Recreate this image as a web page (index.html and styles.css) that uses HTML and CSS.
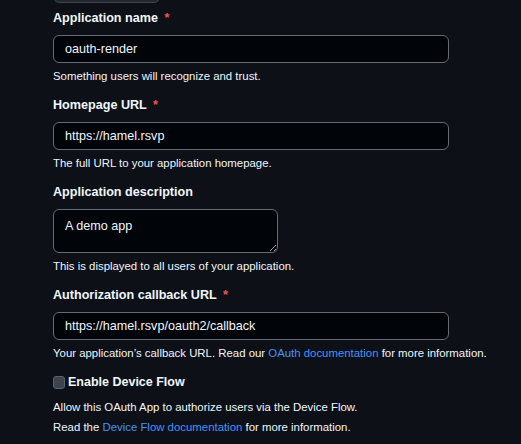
FILE: index.html
```html
<!DOCTYPE html>
<html lang="en">
<head>
<meta charset="utf-8">
<title>Register OAuth app</title>
<link rel="stylesheet" href="styles.css">
</head>
<body>
<form class="form">
  <div class="top-box"></div>

  <div class="group">
    <label class="label">Application name <span class="req">*</span></label>
    <input class="input" type="text" value="oauth-render">
    <p class="note">Something users will recognize and trust.</p>
  </div>

  <div class="group">
    <label class="label">Homepage URL <span class="req">*</span></label>
    <input class="input" type="text" value="https://hamel.rsvp">
    <p class="note">The full URL to your application homepage.</p>
  </div>

  <div class="group">
    <label class="label">Application description</label>
    <textarea class="textarea">A demo app</textarea>
    <p class="note">This is displayed to all users of your application.</p>
  </div>

  <div class="group">
    <label class="label">Authorization callback URL <span class="req">*</span></label>
    <input class="input" type="text" value="https://hamel.rsvp/oauth2/callback">
    <p class="note">Your application’s callback URL. Read our <a class="link" href="#">OAuth documentation</a> for more information.</p>
  </div>

  <div class="check-group">
    <label class="check-label"><span class="checkbox"></span>Enable Device Flow</label>
    <p class="note note-a">Allow this OAuth App to authorize users via the Device Flow.</p>
    <p class="note note-b">Read the <a class="link" href="#">Device Flow documentation</a> for more information.</p>
  </div>
</form>
</body>
</html>
```
FILE: styles.css
```css
html, body {
  margin: 0;
  padding: 0;
  background: #0d1117;
  color: #f0f6fc;
  font-family: "Liberation Sans", Arial, sans-serif;
}

.form {
  padding-left: 53px;
  display: flex;
  flex-direction: column;
}

.top-box {
  width: 107px;
  height: 30px;
  margin-top: -27px;
  box-sizing: border-box;
  background: #212830;
  border: 1px solid #3d444d;
  border-radius: 6px;
}

.group {
  display: flex;
  flex-direction: column;
  align-items: flex-start;
  margin-top: 5px;
}

.group + .group {
  margin-top: 10px;
}

.label {
  font-size: 12.6px;
  font-weight: 700;
  line-height: 21px;
  margin-bottom: 6px;
}

.req {
  color: #f85149;
  margin-left: 3px;
}

.input, .textarea {
  box-sizing: border-box;
  background: #010409;
  border: 1px solid #656c76;
  border-radius: 6px;
  color: #f0f6fc;
  font-family: inherit;
  font-size: 12.6px;
  padding: 0 11px;
  outline: none;
  margin: 0;
}

.input {
  width: 396px;
  height: 28px;
}

.textarea {
  width: 225px;
  height: 44px;
  padding-top: 6px;
  resize: vertical;
  line-height: 20px;
  display: block;
}

.note {
  margin: 4px 0 0;
  font-size: 11.4px;
  line-height: 18px;
  color: #f0f6fc;
  white-space: nowrap;
}

.link {
  color: #4493f8;
  text-decoration: none;
}

.check-group {
  margin-top: 10px;
  display: flex;
  flex-direction: column;
}

.check-label {
  display: flex;
  align-items: center;
  font-size: 12.5px;
  font-weight: 700;
  line-height: 21px;
}

.checkbox {
  width: 12px;
  height: 13px;
  box-sizing: border-box;
  background: #3d444d;
  border: 1px solid #59616b;
  border-radius: 3px;
  margin-right: 3px;
}

.note-a {
  margin-top: 5px;
}

.note-b {
  margin-top: 2px;
}
```
